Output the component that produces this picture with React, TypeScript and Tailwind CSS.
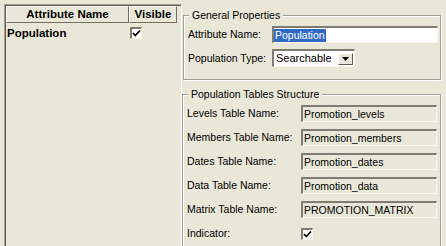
import React from 'react';

const BG = 'bg-[#E9E8D8]';

function Check() {
  return (
    <div className="w-[12px] h-[12px] bg-white border-t-2 border-l-2 border-[#7E7C70] border-b border-r border-b-[#F6F5EC] border-r-[#F6F5EC] flex items-center justify-center">
      <svg width="9" height="9" viewBox="0 0 9 9">
        <path d="M1 4 L3.3 6.5 L8 1.5" fill="none" stroke="#000" strokeWidth="1.8" />
      </svg>
    </div>
  );
}

type Row = { label: string; value: string };

const tableRows: Row[] = [
  { label: 'Levels Table Name:', value: 'Promotion_levels' },
  { label: 'Members Table Name:', value: 'Promotion_members' },
  { label: 'Dates Table Name:', value: 'Promotion_dates' },
  { label: 'Data Table Name:', value: 'Promotion_data' },
  { label: 'Matrix Table Name:', value: 'PROMOTION_MATRIX' },
];

export default function App() {
  return (
    <div
      className={`w-[446px] h-[246px] ${BG} flex overflow-hidden text-black text-[10.5px] leading-[13px]`}
      style={{ fontFamily: '"Liberation Sans", Arial, sans-serif' }}
    >
      {/* left: attribute table */}
      <div className="w-[182px] pl-[4px] pt-[4px] flex">
        <div className="flex-1 border-l border-t border-[#A3A195] border-r border-r-white">
          <div className="h-full border-l border-t border-[#5E5C52] flex flex-col">
            <div className="flex h-[17px] font-bold text-[11.5px]">
              <div className="w-[123px] border-t border-l border-white border-b border-r border-b-[#716F64] border-r-[#716F64] flex items-center justify-center">
                Attribute Name
              </div>
              <div className="w-[48px] border-t border-l border-white border-b border-r border-b-[#716F64] border-r-[#716F64] flex items-center justify-center">
                Visible
              </div>
            </div>
            <div className="flex h-[17px] items-center font-bold text-[11.5px] mt-[2px]">
              <div className="w-[124px] pl-[1px]">Population</div>
              <div className="-mt-[1px]"><Check /></div>
            </div>
          </div>
        </div>
      </div>

      {/* right: properties */}
      <div className="flex-1 pr-[5px]">
        <fieldset className="ml-[1px] mt-[8px] border border-[#A19F93] shadow-[inset_1px_1px_0_#fff,1px_1px_0_#fff] pl-[4px] pr-[2px] pb-[12px]">
          <legend className={`ml-[1px] px-[3px] leading-[14px] ${BG} relative`}>General Properties</legend>
          <div className="flex items-center h-[17px] mt-[4px]">
            <div className="w-[84px]">Attribute Name:</div>
            <div className="flex-1 h-[17px] bg-white border-t-2 border-l-2 border-[#7E7C70] border-b border-r border-b-[#F6F5EC] border-r-[#F6F5EC] flex items-center">
              <span className="bg-[#316AC5] text-white px-[1px] leading-[13px]">Population</span>
            </div>
          </div>
          <div className="flex items-center h-[18px] mt-[6px]">
            <div className="w-[84px]">Population Type:</div>
            <div className="w-[83px] h-[18px] bg-white border-t-2 border-l-2 border-[#7E7C70] border-b border-r border-b-[#F6F5EC] border-r-[#F6F5EC] flex items-center justify-between pl-[2px] pr-[1px]">
              <span className="text-[11px]">Searchable</span>
              <div className={`w-[15px] h-[12px] ${BG} border-t border-l border-white border-b border-r border-b-[#5E5C52] border-r-[#5E5C52] flex items-center justify-center`}>
                <svg width="7" height="4" viewBox="0 0 7 4">
                  <path d="M0 0 H7 L3.5 4 Z" fill="#000" />
                </svg>
              </div>
            </div>
          </div>
        </fieldset>

        <fieldset className="mt-[7px] border border-[#A19F93] shadow-[inset_1px_1px_0_#fff,1px_1px_0_#fff] pl-[4px] pr-[3px] pb-[20px]">
          <legend className={`ml-[1px] px-[3px] leading-[14px] ${BG} relative`}>Population Tables Structure</legend>
          <div className="flex flex-col gap-[7px] mt-[4px]">
            {tableRows.map(r => (
              <div key={r.label} className="flex items-center h-[17px]">
                <div className="w-[114px]">{r.label}</div>
                <div className="flex-1 h-[17px] border-t-2 border-l-2 border-[#7E7C70] border-b border-r border-b-[#F6F5EC] border-r-[#F6F5EC] flex items-center pl-[1px]">
                  {r.value}
                </div>
              </div>
            ))}
            <div className="flex items-center h-[17px]">
              <div className="w-[114px]">Indicator:</div>
              <Check />
            </div>
          </div>
        </fieldset>
      </div>
    </div>
  );
}
